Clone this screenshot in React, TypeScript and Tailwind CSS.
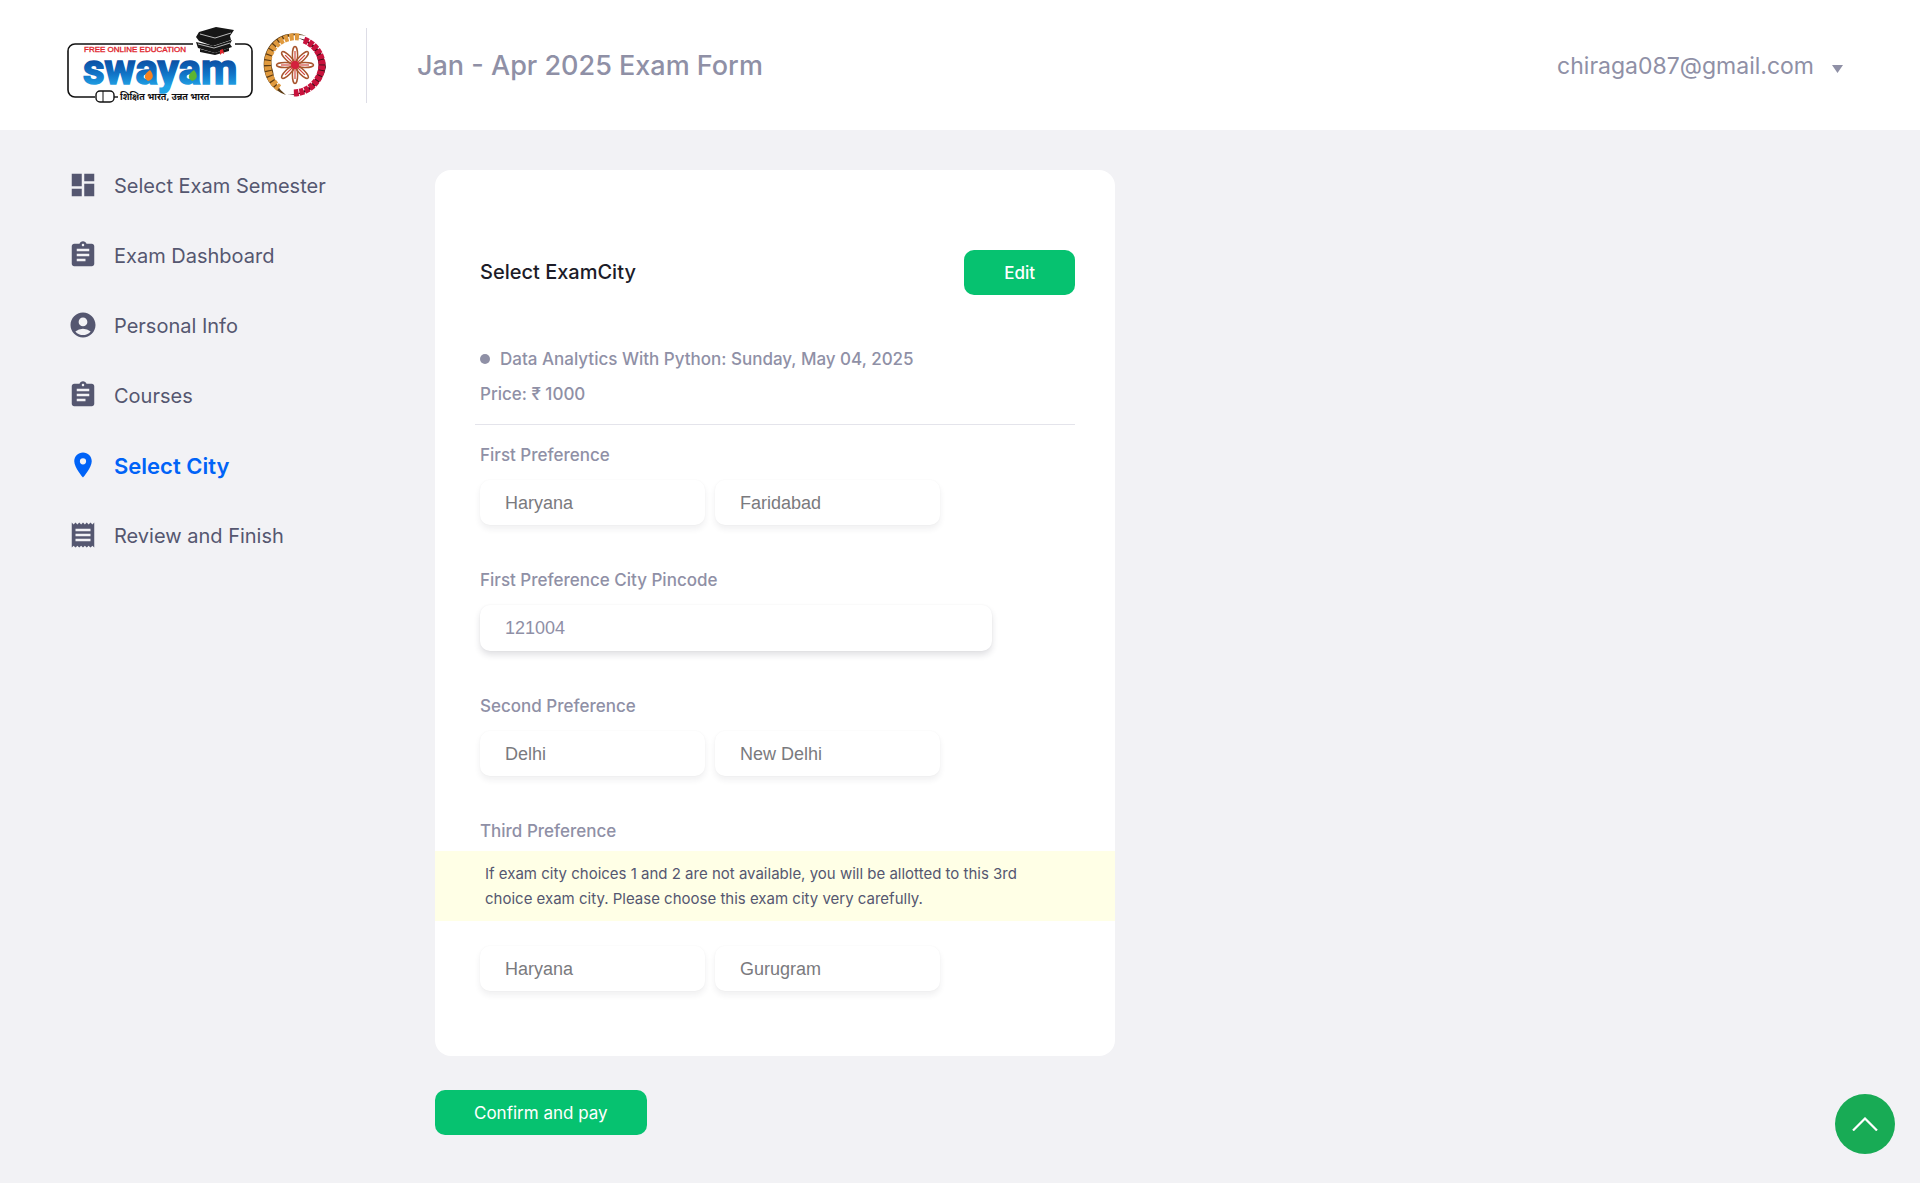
import type { ReactNode } from "react";
import {
  MdAccountCircle,
  MdAssignment,
  MdDashboard,
  MdLocationOn,
  MdReceipt,
} from "react-icons/md";

const navItems = [
  { label: "Select Exam Semester", Icon: MdDashboard },
  { label: "Exam Dashboard", Icon: MdAssignment },
  { label: "Personal Info", Icon: MdAccountCircle },
  { label: "Courses", Icon: MdAssignment },
  { label: "Select City", Icon: MdLocationOn, active: true },
  { label: "Review and Finish", Icon: MdReceipt },
];

function SwayamLogo() {
  return (
    <svg width="186" height="80" viewBox="0 0 186 80" role="img" aria-label="Swayam">
      <defs>
        <linearGradient id="swayam-blue" x1="0" y1="0" x2="0" y2="1">
          <stop offset="0.3" stopColor="#0b4da2" />
          <stop offset="0.6" stopColor="#1175c8" />
          <stop offset="0.85" stopColor="#22a4e6" />
        </linearGradient>
      </defs>
      <rect x="1" y="19" width="184" height="53" rx="7" fill="#fff" stroke="#111" strokeWidth="1.6" />
      <rect x="28" y="64" width="115" height="15" fill="#fff" />
      <path d="M126 18h42v14h-42z" fill="#fff" />
      <text x="17" y="27" fontFamily="Liberation Sans" fontSize="8" fill="#e0262d" stroke="#e0262d" strokeWidth="0.35">
        FREE ONLINE EDUCATION
      </text>
      <text
        x="16"
        y="59"
        fontFamily="Roboto, sans-serif"
        fontWeight="700"
        fontSize="42"
        fill="url(#swayam-blue)"
        stroke="url(#swayam-blue)"
        strokeWidth="1.6"
      >
        swayam
      </text>
      <path d="M81 56c-5-3-4-7 2-11 4 5 4 9-2 11z" fill="#f58220" />
      <path d="M125 56c-5-3-4-7 2-11 4 5 4 9-2 11z" fill="#5cb531" />
      <g fill="#161616">
        <path d="M132 7l17-5 18 3-4 6 1 4-18 6-14-5-3-4z" />
        <path d="M129 17l18 4 18-6-2 4 2 3-17 6-17-5z" />
        <path d="M133 24l15 4 14-5v3l-14 4-15-3z" />
      </g>
      <path d="M133 9l15 4 16-5M131 19l16 4 16-5" fill="none" stroke="#fff" strokeWidth="0.7" />
      <path d="M153 25l3-1 1 5-2-1-2 2z" fill="#e0262d" />
      <rect x="29" y="66" width="18" height="11" rx="4" fill="#fff" stroke="#111" strokeWidth="1.4" />
      <path d="M36 66v11" stroke="#111" strokeWidth="1" />
      <path d="M47 72h4" stroke="#111" strokeWidth="1.4" />
      <text x="53" y="75" fontFamily="'Noto Sans Devanagari', 'Noto Sans', sans-serif" fontWeight="700" fontSize="9" fill="#111">
        शिक्षित भारत, उन्नत भारत
      </text>
    </svg>
  );
}

const petals = [0, 45, 90, 135, 180, 225, 270, 315];

function EmblemLogo() {
  return (
    <svg width="64" height="64" viewBox="0 0 64 64" role="img" aria-label="Emblem">
      <path d="M43 3A30 30 0 0 0 1 27A32 32 0 0 0 23 62A33 33 0 0 1 10 38A27 27 0 0 1 43 3z" fill="#5d3c14" />
      <path
        d="M36 4A28 28 0 0 0 5 27A30 30 0 0 0 16 55"
        fill="none"
        stroke="#e09a3e"
        strokeWidth="7"
        strokeDasharray="4.2 1.2"
      />
      <path d="M35 5A29 29 0 0 1 54 42A29 29 0 0 1 24 61A33 33 0 0 0 63 34A33 33 0 0 0 35 5z" fill="#3a1018" />
      <path
        d="M41 7A28 28 0 0 1 59 30A29 29 0 0 1 30 60"
        fill="none"
        stroke="#c8123c"
        strokeWidth="7"
        strokeDasharray="4.6 0.9"
      />
      {petals.map((angle) => (
        <g key={angle} transform={`rotate(${angle} 32 32)`} fill="none">
          <ellipse cx="32" cy="22" rx="2.6" ry="8.5" stroke="#a8552e" strokeWidth="1.500" />
          <path d="M32 32V18" stroke="#d2453c" strokeWidth="1.200" />
        </g>
      ))}
      <circle cx="32" cy="32" r="4" fill="#d4213d" />
    </svg>
  );
}

function Header() {
  return (
    <header className="flex h-[130px] items-center bg-white pl-[67px] pr-[77px] text-[#8f90a6]">
      <a href="#home" className="flex items-center gap-2.5">
        <SwayamLogo />
        <EmblemLogo />
      </a>
      <div className="ml-[39px] h-[75px] w-px bg-[#dddde6]" />
      <h1 className="ml-[50px] pt-0.5 text-[27px] font-medium leading-9">Jan - Apr 2025 Exam Form</h1>
      <button type="button" className="ml-auto flex items-center gap-[18px] pt-0.5 text-[23px]">
        chiraga087@gmail.com
        <svg width="11" height="8" viewBox="0 0 11 8" className="mt-1.5" aria-hidden="true">
          <path d="M0 0h11L5.500 8z" fill="currentColor" />
        </svg>
      </button>
    </header>
  );
}

function Sidebar() {
  return (
    <nav className="flex w-[367px] shrink-0 flex-col gap-10 text-xl text-[#555770]">
      {navItems.map(({ label, Icon, active }) => (
        <a
          key={label}
          href="#step"
          aria-current={active ? "step" : undefined}
          className={
            active
              ? "flex h-[30px] items-center gap-4 text-[22px] font-semibold text-[#0063f7]"
              : "flex h-[30px] items-center gap-4"
          }
        >
          <Icon size={30} />
          <span className="pt-0.5">{label}</span>
        </a>
      ))}
    </nav>
  );
}

function Choice({ label, value }: { label: string; value: string }) {
  return (
    <select
      aria-label={label}
      disabled
      className="h-[45px] w-[225px] appearance-none rounded-[10px] bg-white px-[25px] font-['Liberation_Sans',sans-serif] text-lg font-normal text-[#7a7a7e] shadow-[0_0_2px_rgba(40,41,61,0.04),0_4px_6px_rgba(40,41,61,0.07)]"
    >
      <option>{value}</option>
    </select>
  );
}

function Preference({ title, state, city, note }: { title: string; state: string; city: string; note?: ReactNode }) {
  return (
    <fieldset>
      <legend className="px-[45px] leading-6">{title}</legend>
      {note}
      <div className={note ? "mt-[25px] flex gap-2.5 px-[45px]" : "mt-[13px] flex gap-2.5 px-[45px]"}>
        <Choice label={`${title} state`} value={state} />
        <Choice label={`${title} city`} value={city} />
      </div>
    </fieldset>
  );
}

function ExamCityCard() {
  return (
    <section className="rounded-2xl bg-white pb-[65px] pt-20 font-medium text-[#8f90a6]">
      <div className="flex items-center justify-between pl-[45px] pr-10">
        <h2 className="pb-0.5 text-xl text-[#1c1c28]">Select ExamCity</h2>
        <button type="button" className="h-[45px] rounded-[10px] bg-[#06c270] px-10 pt-0.5 font-medium text-white">
          Edit
        </button>
      </div>
      <div className="mt-[52px] flex items-center gap-2.5 px-[45px] leading-6">
        <span className="size-2.5 rounded-full bg-[#8f90a6]" />
        Data Analytics With Python: Sunday, May 04, 2025
      </div>
      <p className="mt-[11px] px-[45px] leading-6">Price: ₹ 1000</p>
      <hr className="mx-10 mt-[18px] border-[#e4e4eb]" />
      <div className="mt-[18px] flex flex-col gap-[43px]">
        <Preference title="First Preference" state="Haryana" city="Faridabad" />
        <div className="flex flex-col gap-[13px] px-[45px]">
          <label htmlFor="pincode" className="leading-6">
            First Preference City Pincode
          </label>
          <input
            id="pincode"
            defaultValue="121004"
            className="h-[46px] w-[512px] max-w-full rounded-[10px] bg-white px-[25px] font-['Liberation_Sans',sans-serif] text-lg font-normal shadow-[0_0_2px_rgba(40,41,61,0.05),0_4px_6px_rgba(40,41,61,0.14)]"
          />
        </div>
        <Preference title="Second Preference" state="Delhi" city="New Delhi" />
        <Preference
          title="Third Preference"
          state="Haryana"
          city="Gurugram"
          note={
            <p className="mt-2 bg-[#ffffe6] py-2.5 pl-[50px] pr-20 text-[15px] font-normal leading-[25px] text-[#555770]">
              If exam city choices 1 and 2 are not available, you will be allotted to this 3rd choice exam city. Please
              choose this exam city very carefully.
            </p>
          }
        />
      </div>
    </section>
  );
}

export default function App() {
  return (
    <div className="min-h-screen bg-[#f2f2f5] font-['Inter',sans-serif] text-[17px]">
      <Header />
      <div className="flex pb-12 pl-[68px] pt-10">
        <Sidebar />
        <main className="w-full max-w-[680px]">
          <ExamCityCard />
          <button type="button" className="mt-[34px] h-[45px] rounded-[10px] bg-[#06c270] px-[39px] pt-0.5 text-white">
            Confirm and pay
          </button>
        </main>
      </div>
      <button
        type="button"
        aria-label="Back to top"
        className="fixed bottom-[29px] right-[25px] flex size-[60px] items-center justify-center rounded-full bg-[#18ab55]"
      >
        <svg width="26" height="14" viewBox="0 0 26 14" aria-hidden="true">
          <path d="M1 13.500L13 1.500L25 13.500" fill="none" stroke="#fff" strokeWidth="2.200" />
        </svg>
      </button>
    </div>
  );
}
